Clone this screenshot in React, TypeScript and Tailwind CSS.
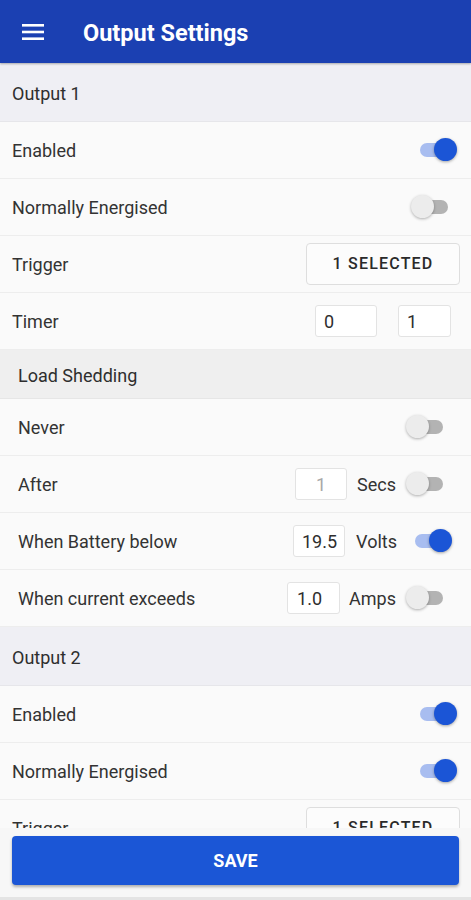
import React from 'react';

const font = { fontFamily: 'Roboto, "Noto Sans", Arial, sans-serif' };

function Toggle({ on }: { on: boolean }) {
  return (
    <div className="relative w-[46px] h-[24px] flex items-center">
      <div
        className={
          on
            ? 'ml-[9px] w-[28px] h-[14px] rounded-full bg-[#a8bdf0]'
            : 'ml-[9px] w-[28px] h-[14px] rounded-full bg-[#b3b3b3]'
        }
      />
      <div
        className={
          on
            ? 'absolute right-0 top-[0px] w-[23px] h-[23px] rounded-full bg-[#1b55d6] shadow-[0_1px_3px_rgba(0,0,0,0.35)]'
            : 'absolute left-0 top-[0px] w-[23px] h-[23px] rounded-full bg-[#ececec] shadow-[0_1px_3px_rgba(0,0,0,0.3)]'
        }
      />
    </div>
  );
}

function SectionHeader({ title }: { title: string }) {
  return (
    <div className="h-[59px] shrink-0 bg-[#efeff4] border-b border-[#e6e6ea] flex items-center px-3 pt-[2px] text-[18px] text-[#2e2e2e]">
      {title}
    </div>
  );
}

function Row({ label, children, inset }: { label: string; children?: React.ReactNode; inset?: boolean }) {
  return (
    <div
      className={
        inset
          ? 'h-[57px] shrink-0 bg-[#fafafa] border-b border-[#ededed] flex items-center justify-between pl-[18px] pr-[19px]'
          : 'h-[57px] shrink-0 bg-[#fafafa] border-b border-[#ededed] flex items-center justify-between pl-3 pr-[14px]'
      }
    >
      <span className="text-[18px] text-[#333]">{label}</span>
      <div className="flex items-center">{children}</div>
    </div>
  );
}

function TriggerButton() {
  return (
    <button className="w-[154px] h-[42px] -mr-[3px] rounded-[4px] border border-[#dedede] bg-[#fcfcfc] text-[16px] font-medium tracking-[1.2px] text-[#2a2a2a]">
      1 SELECTED
    </button>
  );
}

function Box({ value, className }: { value: string; className: string }) {
  return (
    <div className={`h-[32px] rounded-[3px] border border-[#e3e3e3] bg-white flex items-center text-[18px] ${className}`}>
      {value}
    </div>
  );
}

function OutputSection({ n, energised }: { n: number; energised: boolean }) {
  return (
    <>
      <SectionHeader title={`Output ${n}`} />
      <Row label="Enabled">
        <Toggle on />
      </Row>
      <Row label="Normally Energised">
        <Toggle on={energised} />
      </Row>
      <Row label="Trigger">
        <TriggerButton />
      </Row>
      <Row label="Timer">
        <Box value="0" className="w-[62px] px-2 text-[#2e2e2e]" />
        <Box value="1" className="w-[53px] px-2 ml-[21px] mr-[6px] text-[#2e2e2e]" />
      </Row>
    </>
  );
}

export default function App() {
  return (
    <div className="w-[471px] h-[900px] flex flex-col bg-[#fafafa] overflow-hidden" style={font}>
      {/* App bar */}
      <div className="h-[63px] shrink-0 bg-[#1b40b2] flex items-center shadow-[0_1px_2px_rgba(0,0,0,0.3)] z-10">
        <svg width="22" height="18" viewBox="0 0 22 18" className="ml-[22px] mt-[1px]">
          <rect x="0" y="1" width="22" height="2.6" fill="#fff" />
          <rect x="0" y="7.7" width="22" height="2.6" fill="#fff" />
          <rect x="0" y="14.4" width="22" height="2.6" fill="#fff" />
        </svg>
        <h1 className="ml-[39px] pt-[4px] text-[23.5px] font-bold text-white">Output Settings</h1>
      </div>

      {/* Scrolling content */}
      <div className="flex-1 overflow-hidden flex flex-col">
        <OutputSection n={1} energised={false} />

        <div className="h-[49px] shrink-0 bg-[#efefef] border-b border-[#e6e6e6] flex items-center pl-[18px] pt-[2px] text-[18px] text-[#2e2e2e]">
          Load Shedding
        </div>
        <Row label="Never" inset>
          <Toggle on={false} />
        </Row>
        <Row label="After" inset>
          <Box value="1" className="w-[52px] justify-center text-[#a8a8a8]" />
          <span className="ml-[10px] mr-[10px] text-[18px] text-[#333]">Secs</span>
          <Toggle on={false} />
        </Row>
        <Row label="When Battery below" inset>
          <Box value="19.5" className="w-[52px] justify-end pr-[7px] text-[#2e2e2e]" />
          <span className="ml-[11px] mr-[9px] text-[18px] text-[#333]">Volts</span>
          <Toggle on />
        </Row>
        <Row label="When current exceeds" inset>
          <Box value="1.0" className="w-[53px] pl-[9px] text-[#2e2e2e]" />
          <span className="ml-[9px] mr-[10px] text-[18px] text-[#333]">Amps</span>
          <Toggle on={false} />
        </Row>

        <OutputSection n={2} energised />
      </div>

      {/* Footer */}
      <div className="shrink-0 bg-[#f7f7f7] pt-[8px] pb-[12px] px-3 border-b-[3px] border-[#e4e4e4]">
        <button className="w-full h-[49px] rounded-[4px] bg-[#1b56d6] text-white text-[18px] font-bold shadow-[0_2px_3px_rgba(0,0,0,0.3)]">
          SAVE
        </button>
      </div>
    </div>
  );
}
